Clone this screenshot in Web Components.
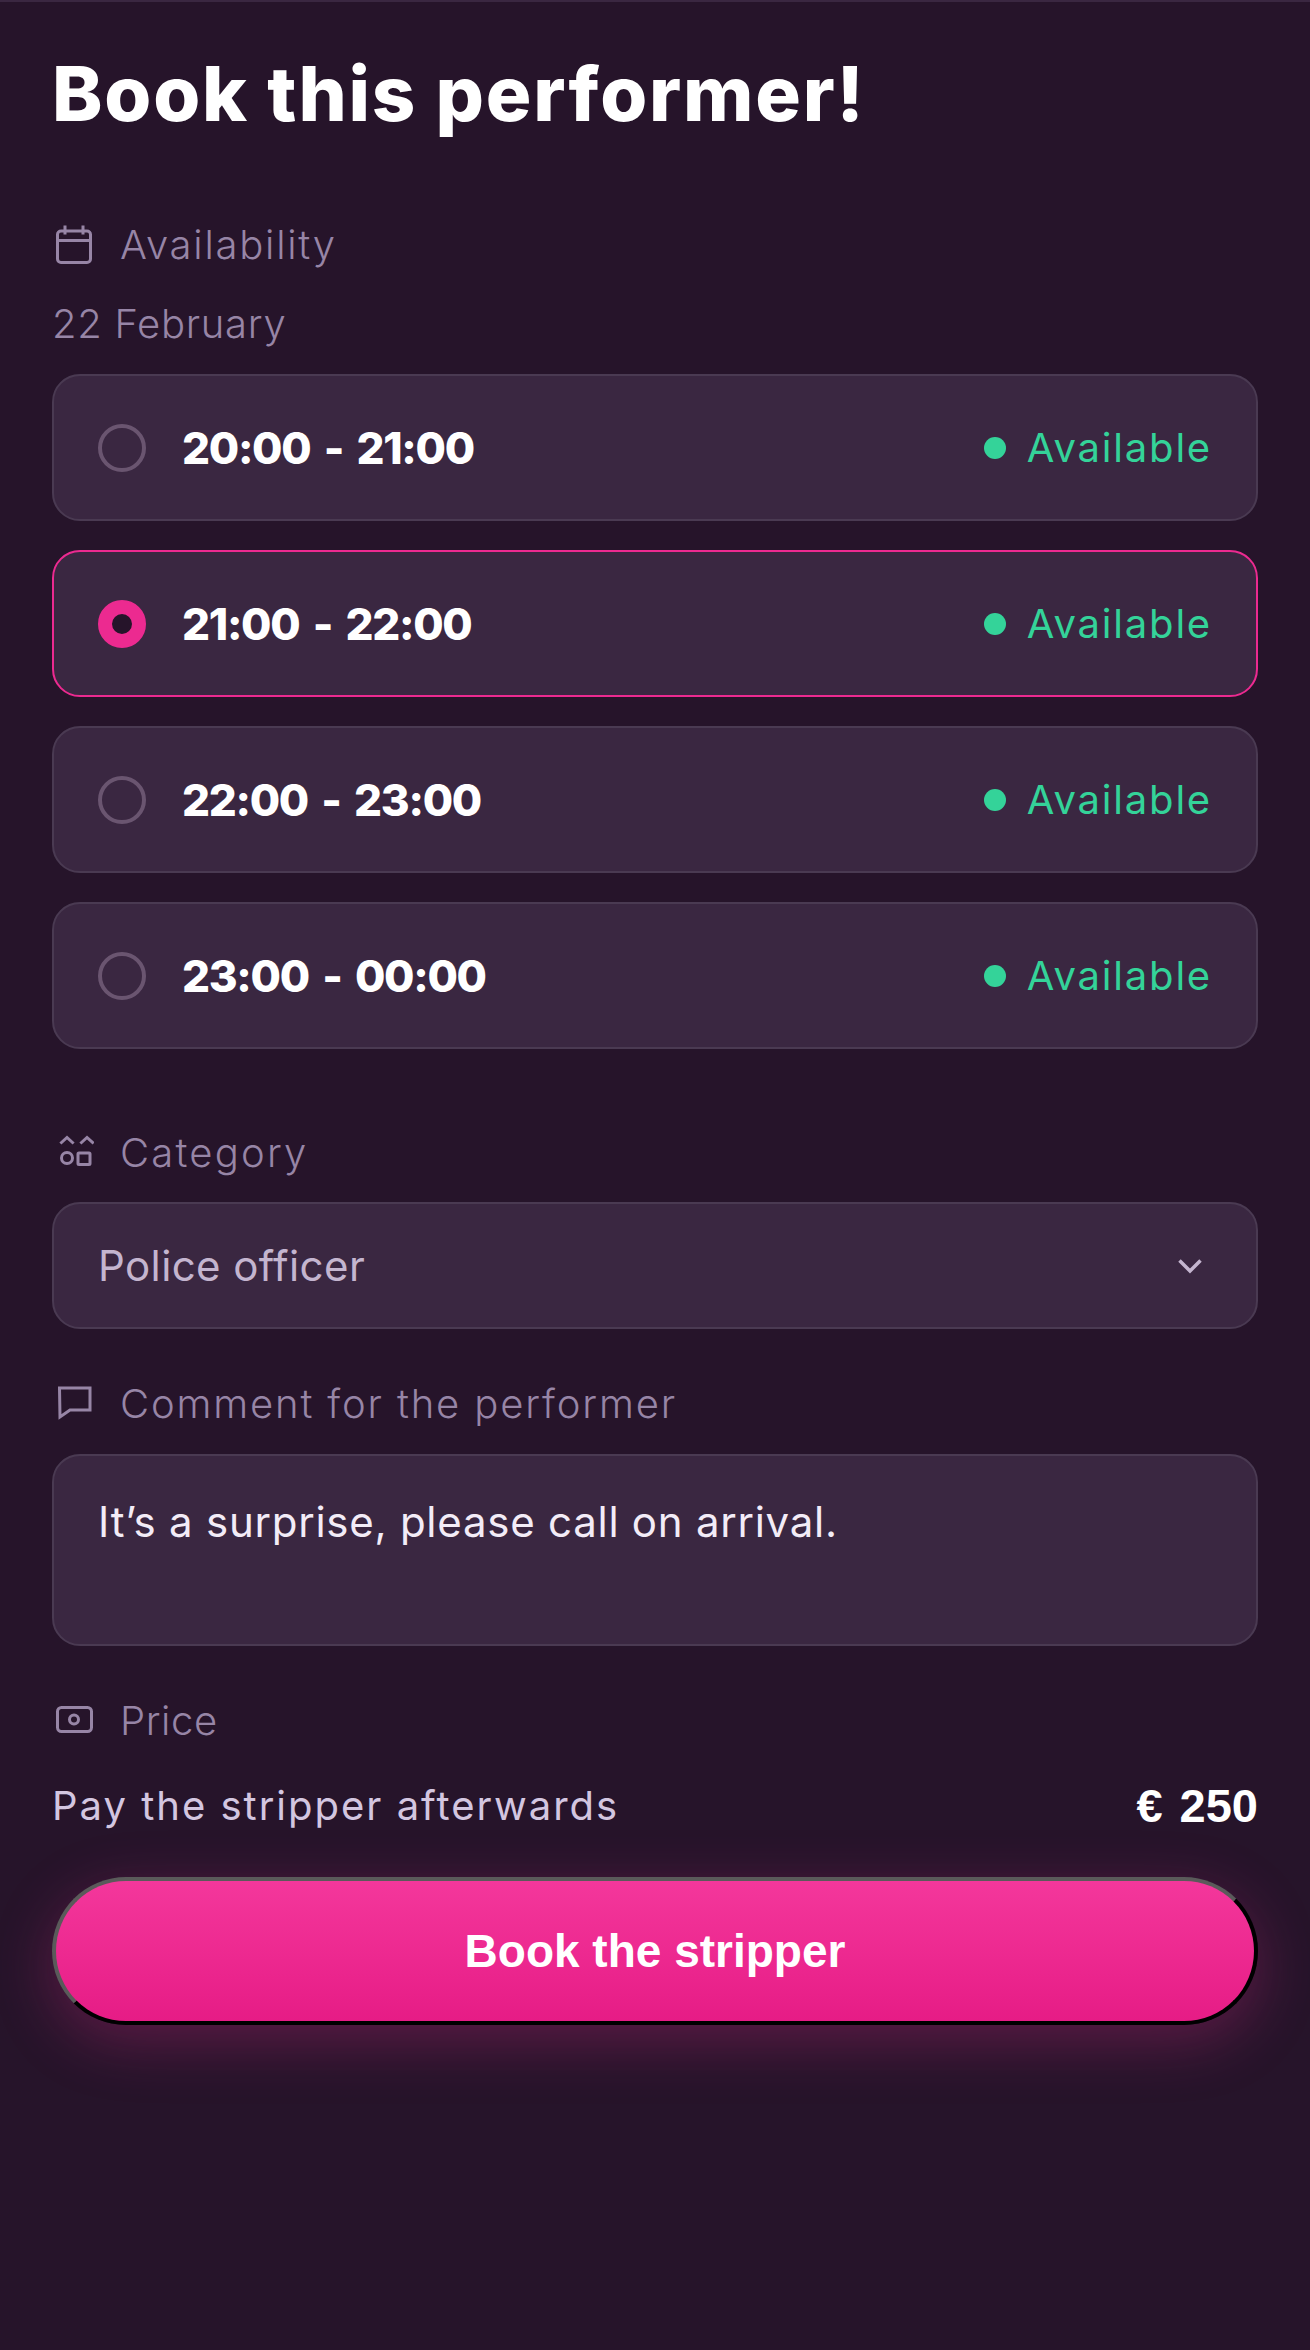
<!DOCTYPE html>
<html lang="en">
<head>
<meta charset="utf-8">
<title>Book this performer</title>
<style>
    html, body { margin: 0; background: #26142a; }
    body { font-family: Inter, "Liberation Sans", sans-serif; }
</style>
</head>
<body>
<booking-page>
    <page-title>Book this performer!</page-title>

    <field-label icon="calendar" style="--track: 1.75px">Availability</field-label>
    <date-line>22 February</date-line>
    <slot-list>
        <time-slot>20:00 - 21:00</time-slot>
        <time-slot selected>21:00 - 22:00</time-slot>
        <time-slot>22:00 - 23:00</time-slot>
        <time-slot>23:00 - 00:00</time-slot>
    </slot-list>

    <field-label icon="category" style="margin-top: 73px; --track: 2.2px">Category</field-label>
    <select-box>Police officer</select-box>

    <field-label icon="comment" style="margin-top: 44px; --track: 1.85px">Comment for the performer</field-label>
    <comment-box>It’s a surprise, please call on arrival.</comment-box>

    <field-label icon="price" style="margin-top: 44px; --track: 0.6px">Price</field-label>
    <price-row amount="€ 250">Pay the stripper afterwards</price-row>
    <book-button>Book the stripper</book-button>
</booking-page>

<script>
class ShadowElement extends HTMLElement {
    constructor() {
        super();
        this.attachShadow({ mode: 'open' });
    }

    connectedCallback() {
        this.shadowRoot.innerHTML = `<style>${this.constructor.style}</style>${this.html}`;
    }

    get html() {
        return '<slot></slot>';
    }
}

class BookingPage extends ShadowElement {
    static get style() {
        return `
            :host {
                display: flex;
                flex-direction: column;
                box-sizing: border-box;
                min-height: 2350px;
                padding: 43px 52px 0;
                border-top: 2px solid #3a2741;
                background: #26142a;
            }
        `;
    }
}

class PageTitle extends ShadowElement {
    static get style() {
        return `
            :host {
                display: block;
                height: 100px;
                margin-top: -2px;
                margin-bottom: 71px;
                font-size: 76px;
                line-height: 100px;
                font-weight: 800;
                letter-spacing: 1.8px;
                color: #fff;
            }
        `;
    }
}

class FieldLabel extends ShadowElement {
    static get icons() {
        return {
            calendar: `
                <rect x="5.5" y="8" width="33" height="31.5" rx="3.5"/>
                <path d="M5.5 17.5H38.5M13 4V10M31 4V10"/>
            `,
            category: `
                <path d="M9.5 11.5L15 6.5L20.5 11.5M29.5 11.5L35 6.5L40.5 11.5"/>
                <circle cx="15" cy="27" r="5.5"/>
                <rect x="26" y="22" width="12" height="11.5" rx="1"/>
            `,
            comment: `
                <path d="M7.5 6H38V28H18L8 35Z" stroke-linejoin="miter"/>
            `,
            price: `
                <rect x="5.5" y="8.5" width="34" height="24" rx="4"/>
                <circle cx="22" cy="20.5" r="4.5"/>
            `,
        };
    }

    static get style() {
        return `
            :host {
                display: flex;
                align-items: center;
                height: 60px;
                font-size: 40px;
                font-weight: 300;
                letter-spacing: var(--track, 1.8px);
                color: #9785a6;
            }
            svg {
                flex: none;
                width: 42px;
                height: 42px;
                margin-right: 26px;
                fill: none;
                stroke: #9785a6;
                stroke-width: 3;
                stroke-linecap: square;
            }
        `;
    }

    get html() {
        const icon = FieldLabel.icons[this.getAttribute('icon')] || '';
        return `<svg viewBox="0 0 42 42">${icon}</svg><slot></slot>`;
    }
}

class DateLine extends ShadowElement {
    static get style() {
        return `
            :host {
                display: block;
                height: 60px;
                margin: 20px 0;
                font-size: 40px;
                line-height: 60px;
                font-weight: 300;
                letter-spacing: 0.7px;
                color: #9785a6;
            }
        `;
    }
}

class SlotList extends ShadowElement {
    static get style() {
        return `
            :host {
                display: flex;
                flex-direction: column;
                gap: 29px;
            }
        `;
    }
}

class TimeSlot extends ShadowElement {
    static get style() {
        return `
            :host {
                display: flex;
                align-items: center;
                box-sizing: border-box;
                height: 147px;
                padding: 0 44px;
                border: 2px solid #4a3a52;
                border-radius: 28px;
                background: #3a2741;
            }
            :host([selected]) {
                border-color: #ec2a90;
            }
            .radio {
                flex: none;
                box-sizing: border-box;
                width: 48px;
                height: 48px;
                margin-right: 36px;
                border: 4px solid #6a5570;
                border-radius: 50%;
            }
            :host([selected]) .radio {
                border: 14px solid #ec2a90;
                background: #26142a;
            }
            .time {
                flex: 1;
                font-size: 44px;
                font-weight: 800;
                letter-spacing: -1.3px;
                word-spacing: 5px;
                color: #fff;
            }
            .status {
                display: flex;
                align-items: center;
                font-size: 40px;
                font-weight: 400;
                letter-spacing: 1.8px;
                color: #34d399;
            }
            .dot {
                width: 22px;
                height: 22px;
                margin-right: 21px;
                border-radius: 50%;
                background: #34d399;
            }
        `;
    }

    get html() {
        return `
            <span class="radio"></span>
            <span class="time"><slot></slot></span>
            <span class="status"><span class="dot"></span>Available</span>
        `;
    }
}

class SelectBox extends ShadowElement {
    static get style() {
        return `
            :host {
                display: flex;
                align-items: center;
                justify-content: space-between;
                box-sizing: border-box;
                height: 127px;
                margin-top: 20px;
                padding: 0 51px 0 44px;
                border: 2px solid #4a3a52;
                border-radius: 28px;
                background: #3a2741;
                font-size: 42px;
                font-weight: 400;
                letter-spacing: 0.4px;
                color: #c4b5cf;
            }
            svg {
                width: 30px;
                height: 30px;
                fill: none;
                stroke: #c4b5cf;
                stroke-width: 3.5;
            }
        `;
    }

    get html() {
        return `
            <slot></slot>
            <svg viewBox="0 0 30 30"><path d="M4.5 9.5L15 20L25.5 9.5"/></svg>
        `;
    }
}

class CommentBox extends ShadowElement {
    static get style() {
        return `
            :host {
                display: block;
                box-sizing: border-box;
                height: 192px;
                margin-top: 21px;
                padding: 36px 44px 0;
                border: 2px solid #4a3a52;
                border-radius: 28px;
                background: #3a2741;
                font-size: 42px;
                line-height: 60px;
                font-weight: 400;
                letter-spacing: 0.75px;
                color: #f3ecf7;
            }
        `;
    }
}

class PriceRow extends ShadowElement {
    static get style() {
        return `
            :host {
                display: flex;
                align-items: center;
                justify-content: space-between;
                height: 60px;
                margin-top: 25px;
                font-size: 40px;
                font-weight: 400;
                letter-spacing: 2px;
                color: #d3c6e0;
            }
            .amount {
                font-family: "Liberation Sans", Arial, sans-serif;
                font-size: 47px;
                font-weight: 700;
                letter-spacing: 0;
                word-spacing: 4px;
                color: #fff;
            }
        `;
    }

    get html() {
        return `
            <span><slot></slot></span>
            <span class="amount">${this.getAttribute('amount')}</span>
        `;
    }
}

class BookButton extends ShadowElement {
    static get style() {
        return `
            :host {
                display: flex;
                align-items: center;
                justify-content: center;
                box-sizing: border-box;
                height: 148px;
                margin-top: 42px;
                border: 4px solid;
                border-color: #5a5a5a #000 #000 #5a5a5a;
                border-radius: 74px;
                background: linear-gradient(180deg, #f4389c, #e61b85);
                background-origin: border-box;
                box-shadow: 0 16px 60px rgba(236, 42, 144, 0.28);
                font-family: "Liberation Sans", Arial, sans-serif;
                font-size: 46px;
                font-weight: 700;
                color: #fff;
            }
        `;
    }
}

customElements.define('booking-page', BookingPage);
customElements.define('page-title', PageTitle);
customElements.define('field-label', FieldLabel);
customElements.define('date-line', DateLine);
customElements.define('slot-list', SlotList);
customElements.define('time-slot', TimeSlot);
customElements.define('select-box', SelectBox);
customElements.define('comment-box', CommentBox);
customElements.define('price-row', PriceRow);
customElements.define('book-button', BookButton);
</script>
</body>
</html>
